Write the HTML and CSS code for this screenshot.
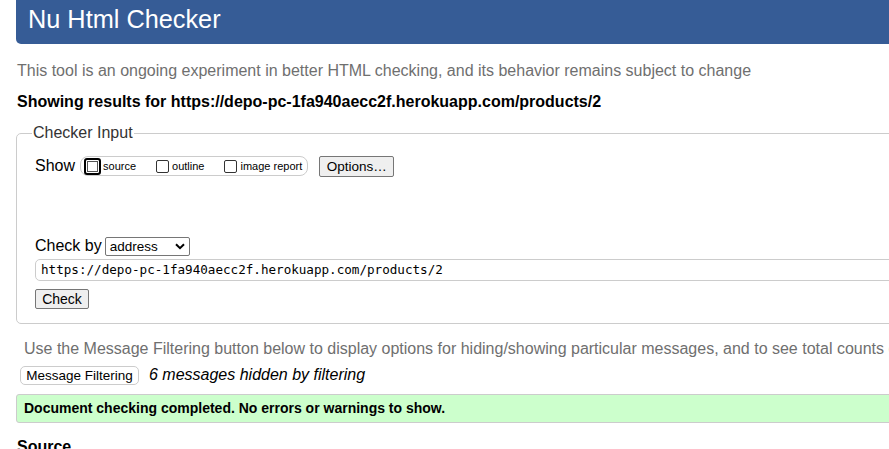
FILE: index.html
```html
<!DOCTYPE html>
<html lang="en">
<head>
<meta charset="utf-8">
<title>Nu Html Checker</title>
<link rel="stylesheet" href="styles.css">
</head>
<body>
<div class="page">
  <h1 class="title">Nu Html Checker</h1>
  <p class="intro">This tool is an ongoing experiment in better HTML checking, and its behavior remains subject to change</p>
  <p class="results">Showing results for https://depo-pc-1fa940aecc2f.herokuapp.com/products/2</p>
  <fieldset class="checker">
    <legend class="legend">Checker Input</legend>
    <div class="show-row">
      <span class="show-label">Show</span>
      <span class="show-group">
        <label class="opt"><span class="box box-focus"></span>source</label>
        <label class="opt"><span class="box"></span>outline</label>
        <label class="opt"><span class="box"></span>image report</label>
      </span>
      <button class="btn btn-options">Options…</button>
    </div>
    <div class="checkby-row">
      <span class="checkby-label">Check by</span>
      <span class="select">address<svg class="chev" width="10" height="7" viewBox="0 0 10 7"><path d="M1 1.2 L5 5.2 L9 1.2" fill="none" stroke="#000" stroke-width="2"/></svg></span>
    </div>
    <div class="url-input">https://depo-pc-1fa940aecc2f.herokuapp.com/products/2</div>
    <button class="btn btn-check">Check</button>
  </fieldset>
  <p class="filter-info">Use the Message Filtering button below to display options for hiding/showing particular messages, and to see total counts of errors and warnings.</p>
  <div class="filter-row">
    <button class="btn btn-filter">Message Filtering</button>
    <em class="hidden-count">6 messages hidden by filtering</em>
  </div>
  <div class="success">Document checking completed. No errors or warnings to show.</div>
  <h2 class="source">Source</h2>
</div>
</body>
</html>
```
FILE: styles.css
```css
html, body {
  margin: 0;
  padding: 0;
  overflow: hidden;
  background: #fff;
}
body {
  font-family: "Liberation Sans", Arial, sans-serif;
  font-size: 16px;
  color: #000;
}
.page {
  width: 1200px;
  padding-left: 16px;
}
.title {
  margin: 0;
  height: 44px;
  line-height: 38px;
  padding-left: 12px;
  background: #365c96;
  color: #fff;
  font-size: 25.3px;
  font-weight: normal;
  border-radius: 0 0 5px 5px;
}
.intro {
  margin: 17px 0 0 1px;
  line-height: 20px;
  color: #6f6f6f;
}
.results {
  margin: 11px 0 0 1px;
  line-height: 20px;
  font-weight: bold;
}
.checker {
  margin: 11px 0 0 0;
  padding: 0 0 14px 18px;
  border: 1px solid #cccccc;
  border-radius: 5px;
}
.legend {
  margin-left: -3px;
  padding: 0 1px;
  line-height: 20px;
  color: #333;
}
.show-row {
  display: flex;
  align-items: center;
  height: 20px;
  margin-top: 13px;
}
.show-label {
  margin-right: 5px;
}
.show-group {
  display: flex;
  align-items: center;
  height: 18px;
  border: 1px solid #ccc;
  border-radius: 8px;
  padding: 0 5px 0 3px;
  font-size: 11px;
}
.opt {
  display: flex;
  align-items: center;
  margin-right: 20px;
}
.opt:last-child {
  margin-right: 0;
}
.box {
  display: inline-block;
  width: 13px;
  height: 13px;
  border: 1px solid #333;
  border-radius: 2px;
  margin-right: 3px;
  box-sizing: border-box;
}
.box-focus {
  width: 17px;
  height: 17px;
  border: 2px solid #000;
  border-radius: 3px;
  box-shadow: inset 0 0 0 1px #fff, inset 0 0 0 2px #555;
  margin-left: 0;
  margin-right: 2px;
}
.btn {
  font-family: "Liberation Sans", Arial, sans-serif;
  font-size: 13.5px;
  background: #efefef;
  border: 1px solid #767676;
  border-radius: 2px;
  color: #000;
  padding: 0 6px;
  margin: 0;
}
.btn-options {
  margin-left: 11px;
  height: 21px;
  width: 75px;
}
.checkby-row {
  display: flex;
  align-items: center;
  margin-top: 60px;
  height: 20px;
}
.checkby-label {
  margin-right: 3px;
}
.select {
  display: inline-flex;
  align-items: center;
  justify-content: space-between;
  box-sizing: border-box;
  width: 85px;
  height: 19px;
  border: 1px solid #767676;
  border-radius: 2px;
  padding: 0 4px 0 4px;
  font-size: 13.5px;
}
.url-input {
  margin-top: 3px;
  height: 22px;
  box-sizing: border-box;
  border: 1px solid #ccc;
  border-radius: 5px;
  padding-left: 5px;
  line-height: 20px;
  font-family: "DejaVu Sans Mono", "Liberation Mono", monospace;
  font-size: 12.6px;
}
.btn-check {
  margin-top: 8px;
  height: 20px;
  width: 54px;
  font-size: 14px;
}
.filter-info {
  margin: 15px 0 0 8px;
  line-height: 20px;
  color: #6f6f6f;
  white-space: nowrap;
}
.filter-row {
  display: flex;
  align-items: center;
  margin: 6px 0 0 4px;
  height: 20px;
}
.btn-filter {
  background: #fff;
  border: 1px solid #ccc;
  border-radius: 5px;
  height: 19px;
  width: 119px;
  padding: 0;
  font-size: 13.5px;
}
.hidden-count {
  margin-left: 10px;
}
.success {
  margin-top: 9px;
  height: 29px;
  box-sizing: border-box;
  background: #ccffcc;
  border: 1px solid #ccc;
  border-radius: 3px;
  padding-left: 7px;
  line-height: 27px;
  font-weight: bold;
  font-size: 14px;
}
.source {
  margin: 14px 0 0 1px;
  font-size: 16px;
  line-height: 20px;
}
```
